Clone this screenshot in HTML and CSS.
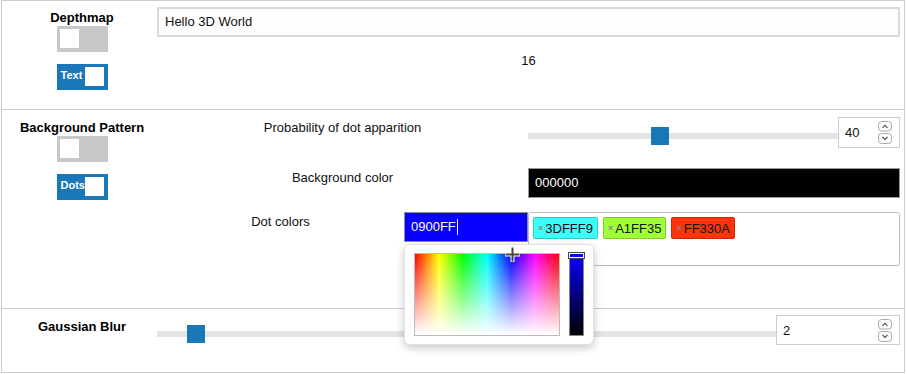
FILE: index.html
```html
<!DOCTYPE html>
<html lang="en">
<head>
    <meta charset="UTF-8">
    <title>Stereogram settings</title>
    <link rel="stylesheet" href="styles.css">
</head>
<body>
    <div class="panel">
        <!-- Depthmap -->
        <section class="row row-depth">
            <div class="side">
                <h3>Depthmap</h3>
                <div class="toggle"><span class="knob"></span></div>
                <div class="toggle on"><span class="label">Text</span><span class="knob"></span></div>
            </div>
            <div class="main">
                <div class="text-field">Hello 3D World</div>
                <div class="count">16</div>
            </div>
        </section>

        <!-- Background pattern -->
        <section class="row row-pattern">
            <div class="side">
                <h3>Background Pattern</h3>
                <div class="toggle"><span class="knob"></span></div>
                <div class="toggle on"><span class="label">Dots</span><span class="knob"></span></div>
            </div>
            <div class="main">
                <div class="opt">
                    <div class="opt-label">Probability of dot apparition</div>
                    <div class="slider">
                        <span class="track"></span>
                        <span class="handle" style="left: 39.8%"></span>
                    </div>
                    <div class="num num-small">
                        <span>40</span>
                        <svg class="spin" width="15" height="23" viewBox="0 0 15 23">
                            <rect x="0.5" y="0.5" width="13" height="9.5" rx="3" fill="#fafafa" stroke="#aaa"/>
                            <rect x="0.5" y="12.5" width="13" height="10" rx="3" fill="#fafafa" stroke="#aaa"/>
                            <path d="M4.5 6.8 L7 4.3 L9.5 6.8" fill="none" stroke="#555" stroke-width="1.2"/>
                            <path d="M4.5 16 L7 18.5 L9.5 16" fill="none" stroke="#555" stroke-width="1.2"/>
                        </svg>
                    </div>
                </div>

                <div class="opt opt-bg">
                    <div class="opt-label">Background color</div>
                    <div class="color-field">000000</div>
                </div>

                <div class="opt opt-dots">
                    <div class="opt-label narrow">Dot colors</div>
                    <div class="picker-wrap">
                        <div class="color-field blue">0900FF<span class="caret"></span></div>
                        <div class="picker">
                            <div class="spectrum">
                                <svg class="cross" width="17" height="17" viewBox="0 0 17 17">
                                    <path d="M8.5 1 V16 M1 8.5 H16" stroke="#fff" stroke-width="4"/>
                                    <path d="M8.5 1.5 V15.5 M1.5 8.5 H15.5" stroke="#444" stroke-width="2"/>
                                </svg>
                            </div>
                            <div class="hue">
                                <span class="hue-marker"></span>
                            </div>
                        </div>
                    </div>
                    <div class="tags">
                        <span class="tag" style="background: #3dfff9"><i>×</i>3DFFF9</span>
                        <span class="tag" style="background: #a1ff35"><i>×</i>A1FF35</span>
                        <span class="tag" style="background: #ff330a"><i>×</i>FF330A</span>
                    </div>
                </div>
            </div>
        </section>

        <!-- Gaussian blur -->
        <section class="row row-blur">
            <div class="side">
                <h3>Gaussian Blur</h3>
            </div>
            <div class="main">
                <div class="opt">
                    <div class="slider">
                        <span class="track"></span>
                        <span class="handle" style="left: 4.9%"></span>
                    </div>
                    <div class="num num-wide">
                        <span>2</span>
                        <svg class="spin" width="15" height="23" viewBox="0 0 15 23">
                            <rect x="0.5" y="0.5" width="13" height="9.5" rx="3" fill="#fafafa" stroke="#aaa"/>
                            <rect x="0.5" y="12.5" width="13" height="10" rx="3" fill="#fafafa" stroke="#aaa"/>
                            <path d="M4.5 6.8 L7 4.3 L9.5 6.8" fill="none" stroke="#555" stroke-width="1.2"/>
                            <path d="M4.5 16 L7 18.5 L9.5 16" fill="none" stroke="#555" stroke-width="1.2"/>
                        </svg>
                    </div>
                </div>
            </div>
        </section>
    </div>
</body>
</html>
```

FILE: styles.css
```css
/* Reset */
* {
    margin: 0;
    padding: 0;
    box-sizing: border-box;
}

body {
    font-family: "Liberation Sans", Arial, sans-serif;
    font-size: 13px;
    color: #111;
    background: #fff;
}

/* Outer panel */
.panel {
    margin-left: 1px;
    width: 904px;
    height: 373px;
    border: 1px solid #ccc;
}

.row {
    display: flex;
}

.row-depth {
    height: 109px;
    border-bottom: 1px solid #ccc;
}

.row-pattern {
    height: 199px;
    border-bottom: 1px solid #ccc;
}

.row-blur {
    height: 63px;
}

/* Left column with title and switches */
.side {
    width: 155px;
    padding: 10px 0 0 5px;
    display: flex;
    flex-direction: column;
    align-items: center;
}

.row-depth .side {
    padding-top: 9px;
}

.side h3 {
    font-size: 13px;
    font-weight: bold;
    line-height: 15px;
    color: #000;
}

.toggle {
    position: relative;
    width: 51px;
    height: 26px;
    margin-top: 1px;
    background-color: #c8c8c8;
}

.toggle .knob {
    position: absolute;
    top: 3px;
    left: 3px;
    width: 19px;
    height: 19px;
    background-color: #fff;
}

.toggle.on {
    margin-top: 12px;
    background-color: #1a78b9;
}

.toggle.on .knob {
    left: auto;
    right: 4px;
}

.toggle .label {
    display: block;
    padding-left: 4px;
    color: #fff;
    font-size: 11px;
    font-weight: bold;
    line-height: 23px;
}

/* Right column */
.main {
    flex: 1;
    padding: 6px 4px 0 0;
}

.row-pattern .main {
    padding-top: 7px;
}

.text-field {
    height: 30px;
    padding-left: 6px;
    line-height: 26px;
    border: 2px solid #dadada;
    background-color: #fdfdfd;
}

.count {
    margin-top: 16px;
    text-align: center;
    line-height: 15px;
}

/* Option rows */
.opt {
    display: flex;
    align-items: flex-start;
}

.opt-label {
    width: 371px;
    padding-top: 3px;
    line-height: 15px;
    text-align: center;
}

.opt-label.narrow {
    width: 247px;
}

.opt-bg {
    margin-top: 20px;
}

.opt-dots {
    margin-top: 14px;
}

.opt-bg .opt-label,
.opt-dots .opt-label {
    padding-top: 2px;
}

/* Slider */
.slider {
    flex: 1;
    position: relative;
    height: 18px;
    margin-top: 10px;
}

.slider .track {
    position: absolute;
    left: 0;
    right: 0;
    top: 6px;
    height: 6px;
    background-color: #e4e4e4;
}

.slider .handle {
    position: absolute;
    top: 0;
    width: 18px;
    height: 18px;
    background-color: #1a78b9;
}

/* Number input with spinner */
.num {
    display: flex;
    align-items: center;
    justify-content: space-between;
    padding: 0 6px 0 6px;
    border: 1px solid #ccc;
    background-color: #fff;
}

.num-small {
    width: 62px;
    height: 31px;
}

.num-wide {
    width: 124px;
    height: 30px;
}

/* Colour fields */
.color-field {
    flex: 1;
    height: 30px;
    padding-left: 6px;
    line-height: 28px;
    color: #fff;
    background-color: #000;
    border: 1px solid #999;
}

.picker-wrap {
    position: relative;
    width: 124px;
}

.color-field.blue {
    background-color: #0900ff;
    border-color: #8a8aa8;
}

.caret {
    display: inline-block;
    width: 1px;
    height: 16px;
    margin-left: 1px;
    vertical-align: -4px;
    background-color: #fff;
}

/* Colour picker popup */
.picker {
    position: absolute;
    top: 32px;
    left: 0;
    z-index: 2;
    display: flex;
    gap: 9px;
    width: 190px;
    height: 101px;
    padding: 8px 9px 0 9px;
    background-color: #fff;
    border: 1px solid #e2e2e2;
    border-radius: 6px;
    box-shadow: 0 3px 8px rgba(0, 0, 0, 0.22);
}

.spectrum {
    position: relative;
    width: 147px;
    height: 83px;
    border: 1px solid #bbb;
    background:
        linear-gradient(to bottom, rgba(255, 255, 255, 0), #fff),
        linear-gradient(to right, #f00, #ff0, #0f0, #0ff, #00f, #f0f, #f00);
}

.cross {
    position: absolute;
    left: 89px;
    top: -8px;
}

.hue {
    position: relative;
    width: 15px;
    height: 83px;
    border: 1px solid #888;
    background: linear-gradient(to bottom, #0900ff, #000);
}

.hue-marker {
    position: absolute;
    top: -2px;
    left: -2px;
    width: 17px;
    height: 7px;
    border: 1px solid #444;
    background-color: #0900ff;
    box-shadow: inset 0 0 0 1px #fff;
}

/* Tag list */
.tags {
    flex: 1;
    height: 54px;
    padding: 4px;
    border: 1px solid #bbb;
    border-radius: 3px;
    display: flex;
    align-items: flex-start;
    gap: 5px;
}

.tag {
    display: inline-flex;
    align-items: center;
    height: 22px;
    padding: 0 4px 0 4px;
    border: 1px solid rgba(0, 0, 0, 0.2);
    border-radius: 2px;
    color: #111;
}

.tag i {
    font-style: normal;
    font-weight: bold;
    font-size: 9px;
    color: #888;
    margin-right: 2px;
}
```
